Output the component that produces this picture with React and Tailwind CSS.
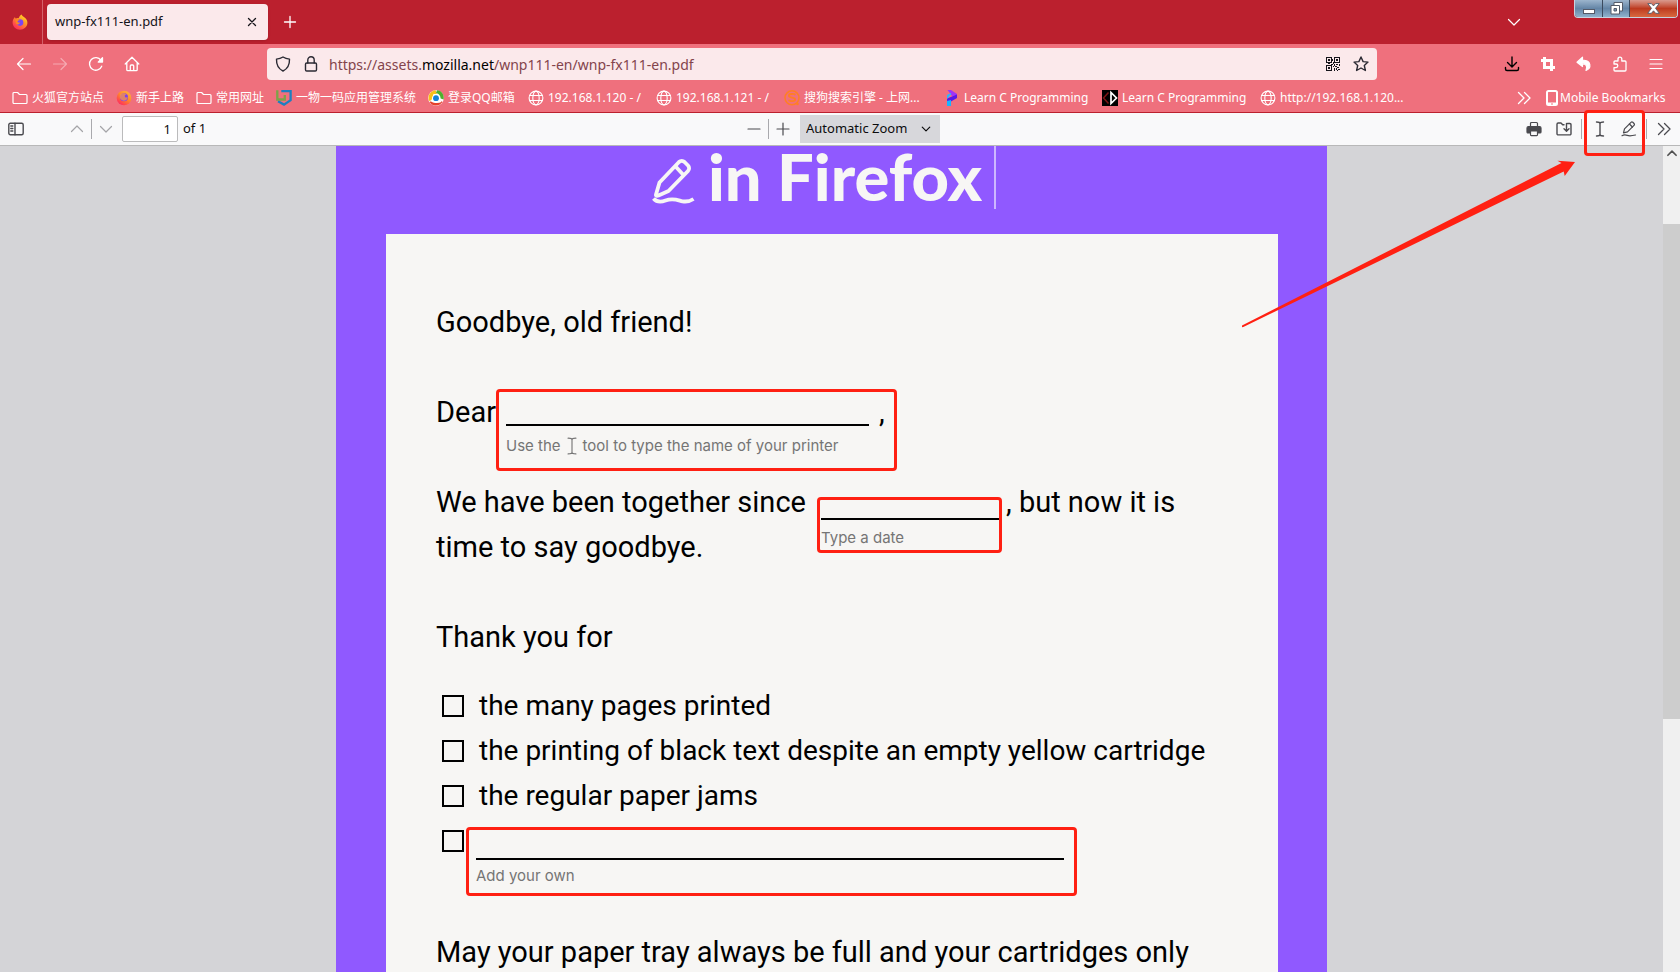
import React from "react";

const base = { fill: "none", stroke: "currentColor", strokeLinecap: "round", strokeLinejoin: "round" };

function Icon({ children, size = 16, sw = 1.2, className = "" }) {
  return (
    <svg viewBox="0 0 16 16" width={size} height={size} {...base} strokeWidth={sw} className={`shrink-0 ${className}`} aria-hidden="true">
      {children}
    </svg>
  );
}

function FirefoxLogo({ soft = false }) {
  return (
    <svg viewBox="0 0 16 16" width="16" height="16" className="shrink-0" aria-hidden="true">
      <defs>
        <linearGradient id={soft ? "fxs" : "fx"} x1="0.85" y1="0.05" x2="0.2" y2="0.95">
          <stop offset="0" stopColor={soft ? "#ffb13c" : "#ffe226"} />
          <stop offset="0.45" stopColor="#ff8a2a" />
          <stop offset="1" stopColor="#ff2a5f" />
        </linearGradient>
      </defs>
      {soft ? (
        <>
          <circle cx="8" cy="8" r="7.3" fill="url(#fxs)" />
          <circle cx="8" cy="7.2" r="4" fill="#7d3ff0" />
          <path d="M4 4.5c1.5-1.6 5.4-2 7 .6-1.5-.6-2.3 0-2.2 1.2.1 1.3 1.7 1.7 3 .8C11.5 10 9 11.3 6.8 10.6 4 9.7 3.2 7 4 4.5z" fill="#ff9a3d" opacity="0.75" />
        </>
      ) : (
        <>
          <path d="M.6 8.7C.5 6.4 1.5 4.3 3 2.9c0 .8.3 1.4.7 1.7.9-.5 2-.7 3-.4C7 2.7 8 1.4 9.6.4c.3 1.5 2 2.2 3.3 3.4 1.5 1.3 2.6 3 2.5 5.2-.2 3.9-3.4 6.7-7.4 6.7S.8 12.7.6 8.7z" fill="url(#fx)" />
          <circle cx="8" cy="8.6" r="3.3" fill="#7a45f5" />
          <path d="M3.6 5.5c1.5-.7 3.4-.4 4.4.7-1.6 0-2.5.7-2.4 1.5.3 1 1.3.9 2.3.9 0 1.4-1.7 2.2-3.3 1.6-.8-1.3-1.3-2.9-1-4.7z" fill="#ff8a1e" />
        </>
      )}
    </svg>
  );
}

const Folder = () => (
  <Icon><path d="M1 12.5v-9a1 1 0 0 1 1-1h3.6l1.9 2H14a1 1 0 0 1 1 1v7a1 1 0 0 1-1 1H2a1 1 0 0 1-1-1z" /></Icon>
);

const Globe = () => (
  <Icon sw={1.1}>
    <circle cx="8" cy="8" r="6.9" />
    <ellipse cx="8" cy="8" rx="3.2" ry="6.9" />
    <path d="M1.8 5.5h12.4M1.8 10.5h12.4" />
  </Icon>
);

const ShieldLogo = () => (
  <svg viewBox="0 0 16 16" width="16" height="16" className="shrink-0" aria-hidden="true">
    <path d="M5.3 1.2h9.3v9L8 14.6l-6-3.4" fill="none" stroke="#1d7fc0" strokeWidth="2.3" />
    <path d="M1.3.2v9.3h7.5V5" fill="none" stroke="#7ba348" strokeWidth="2.3" />
  </svg>
);

const QQMail = () => (
  <svg viewBox="0 0 16 16" width="16" height="16" className="shrink-0" aria-hidden="true">
    <circle cx="8" cy="8" r="7.8" fill="#fff" />
    <path d="M1 11C-.5 6 2 1 7.500.3L9 3.500C5.500 4 3.500 7 4 10z" fill="#f9c018" />
    <path d="M9 .3c5 .5 7.500 5 6.600 9.200l-3-1C12.600 5.500 11 4 8 3z" fill="#4faf2e" />
    <path d="M1.500 12c3 4.700 9.500 4.700 13 0l-2-1.500c-3 2-6 2-9 .5z" fill="#e5402b" />
    <path d="M3 11.500l2.500-7.500h4.500l3.500 8c-3 1.500-7 1.500-10.500-.5z" fill="#fff" />
    <circle cx="8" cy="8.2" r="2.9" fill="#1583d8" />
  </svg>
);

const Sogou = () => (
  <svg viewBox="0 0 16 16" width="16" height="16" className="shrink-0" aria-hidden="true">
    <circle cx="8" cy="7.8" r="7" fill="none" stroke="#ff7f24" strokeWidth="1.5" />
    <path d="M11.5 4.7c-2-1.2-6.6-1-6.6 1.1 0 2.4 6.3 1.2 6.3 3.7 0 2-4.5 2-6.7.7" fill="none" stroke="#ff7f24" strokeWidth="1.8" />
    <circle cx="13.5" cy="14" r="1.3" fill="#ff7f24" />
  </svg>
);

const Programiz = () => (
  <svg viewBox="0 0 16 16" width="16" height="16" className="shrink-0" aria-hidden="true">
    <path d="M3.5 0h3.5l6 4v1.5L8 6z" fill="#a033f7" />
    <path d="M13 4.5v3.5L7 11.5 3 12V8.5z" fill="#5a17ea" />
    <path d="M3 5l4-2v1.5L3 9z" fill="#28b8ff" />
    <path d="M3 11l4-1v6H3z" fill="#18b4ff" />
  </svg>
);

const LearnC = () => (
  <svg viewBox="0 0 16 16" width="16" height="16" className="shrink-0" aria-hidden="true">
    <rect width="16" height="16" fill="#000" />
    <path d="M6.5 2.5L1.5 8l5 5.5" fill="none" stroke="#7c1416" strokeWidth="1.5" />
    <path d="M9 2.5v11L14.5 8z" fill="none" stroke="#fff" strokeWidth="1.7" />
  </svg>
);

const Chevrons = () => <Icon sw={1.3}><path d="M2.5 2.5L8 8l-5.5 5.5M8.5 2.5L14 8l-5.5 5.5" /></Icon>;

const bookmarks = [
  { label: "火狐官方站点", icon: <Folder />, width: "w-[92px]" },
  { label: "新手上路", icon: <FirefoxLogo soft />, width: "w-[68px]" },
  { label: "常用网址", icon: <Folder />, width: "w-[68px]" },
  { label: "一物一码应用管理系统", icon: <ShieldLogo />, width: "w-[140px]" },
  { label: "登录QQ邮箱", icon: <QQMail />, width: "w-[88px]" },
  { label: "192.168.1.120 - /", icon: <Globe />, width: "w-[116px]" },
  { label: "192.168.1.121 - /", icon: <Globe />, width: "w-[116px]" },
  { label: "搜狗搜索引擎 - 上网...", icon: <Sogou />, width: "w-[148px]" },
  { label: "Learn C Programming", icon: <Programiz />, width: "w-[146px]" },
  { label: "Learn C Programming", icon: <LearnC />, width: "w-[146px]" },
  { label: "http://192.168.1.120...", icon: <Globe />, width: "w-[148px]" },
];

function IconButton({ label, children, className = "" }) {
  return (
    <button type="button" aria-label={label} className={`flex h-8 w-9 shrink-0 items-center justify-center ${className}`}>
      {children}
    </button>
  );
}

function TabBar() {
  return (
    <header className="flex h-11 shrink-0 bg-[#bb202e] text-white">
      <div className="flex w-[43px] shrink-0 items-center justify-center border-r border-[#d4616b] pr-0.5">
        <FirefoxLogo />
      </div>
      <div className="my-1 ml-1 flex w-[221px] items-center justify-between rounded bg-[#fbe9eb] pr-2 pl-2 text-[13px] text-[#15141a] shadow">
        <span>wnp-fx111-en.pdf</span>
        <button type="button" aria-label="Close tab" className="flex size-4 items-center justify-center">
          <Icon sw={1.3}><path d="M4.5 4.5l7 7M11.5 4.5l-7 7" /></Icon>
        </button>
      </div>
      <button type="button" aria-label="New tab" className="flex w-11 items-center justify-center">
        <Icon sw={1.3}><path d="M8 2.5v11M2.5 8h11" /></Icon>
      </button>
      <div className="flex-1" />
      <button type="button" aria-label="List all tabs" className="mr-[52px] flex w-4 items-center justify-center">
        <Icon><path d="M2.5 5.5L8 11l5.5-5.5" /></Icon>
      </button>
      <div className="mr-0.5 flex h-[18px] overflow-hidden rounded-b-sm border border-t-0 border-[#c9d3e0]">
        <button type="button" aria-label="Minimize" className="flex w-7 items-center justify-center border-r border-[#3b4a5e] bg-gradient-to-b from-[#9cb5cd] via-[#6485a6] to-[#8fb2cd]">
          <svg width="12" height="12" viewBox="0 0 12 12" aria-hidden="true"><rect x=".5" y="6.5" width="11" height="4" fill="#fff" stroke="#545a68" /></svg>
        </button>
        <button type="button" aria-label="Restore" className="flex w-[27px] items-center justify-center border-r border-[#3b4a5e] bg-gradient-to-b from-[#9cb5cd] via-[#6485a6] to-[#8fb2cd]">
          <svg width="13" height="13" viewBox="0 0 13 13" aria-hidden="true">
            <path d="M4 .5h8.5V9H4z" fill="#fff" stroke="#545a68" />
            <path d="M1 3.5h8.5V12H1z" fill="#fff" stroke="#545a68" />
            <path d="M4 6.5h2.5V9H4z" fill="#7895b3" stroke="#545a68" />
          </svg>
        </button>
        <button type="button" aria-label="Close" className="flex w-[47px] items-center justify-center bg-gradient-to-b from-[#d99a8e] via-[#bd3a1f] to-[#d8693f]">
          <svg width="13" height="11" viewBox="0 0 13 11" aria-hidden="true">
            <path d="M.8.6h3.6l2.1 2.3L8.6.6h3.6L8.5 5.3l3.8 5H8.6L6.5 7.8l-2.1 2.5H.7l3.8-5z" fill="#fff" stroke="#545a68" strokeWidth=".9" />
          </svg>
        </button>
      </div>
    </header>
  );
}

function NavBar() {
  return (
    <nav aria-label="Navigation" className="flex h-10 shrink-0 items-center bg-[#ef707d] pl-1.5 text-white">
      <IconButton label="Back"><Icon><path d="M14.5 8h-13M7 2.5L1.5 8 7 13.5" /></Icon></IconButton>
      <IconButton label="Forward" className="opacity-40"><Icon><path d="M1.5 8h13M9 2.5L14.5 8 9 13.5" /></Icon></IconButton>
      <IconButton label="Reload">
        <Icon sw={1.3}><path d="M13.7 10.2A6.3 6.3 0 1 1 13 4.3" /><path d="M14.5 1.8v4.3h-4.3z" fill="currentColor" /></Icon>
      </IconButton>
      <IconButton label="Home">
        <Icon sw={1.3}><path d="M1.2 8L8 1.2 14.8 8M2.8 6.5v7.2a1 1 0 0 0 1 1h8.4a1 1 0 0 0 1-1V6.5M6.3 14.5V10a1 1 0 0 1 1-1h1.4a1 1 0 0 1 1 1v4.5" /></Icon>
      </IconButton>
      <div className="ml-[117px] flex h-8 min-w-0 flex-1 items-center rounded bg-[#fbe9eb] pr-2 pl-2 text-[#2b2a33]">
        <Icon sw={1.4}><path d="M8 1c2 1.3 4 1.9 6.5 2.1C14.7 8.5 12.7 12.7 8 15 3.3 12.7 1.3 8.5 1.5 3.1 4 2.9 6 2.3 8 1z" /></Icon>
        <Icon sw={1.4} className="ml-3"><rect x="2.5" y="7" width="11" height="8" rx="1.2" /><path d="M4.8 7V4a3.2 3.2 0 0 1 6.4 0v3" /></Icon>
        <a href="https://assets.mozilla.net/wnp111-en/wnp-fx111-en.pdf" className="ml-2.5 flex-1 truncate text-[14px] text-[#83444b]">
          https://assets.<span className="text-black">mozilla.net</span>/wnp111-en/wnp-fx111-en.pdf
        </a>
        <button type="button" aria-label="QR code" className="mr-3">
          <svg width="16" height="16" viewBox="0 0 16 16" fill="#15141a" shapeRendering="crispEdges" aria-hidden="true">
            <path fillRule="evenodd" d="M1 1h6v6H1zM2 2v4h4V2zM3 3h2v2H3zM9 1h6v6H9zM10 2v4h4V2zM11 3h2v2h-2zM1 9h6v6H1zM2 10v4h4v-4zM3 11h2v2H3z" />
            <path d="M7 3h1v2H7zM8 6h1v2H8zM3 7h2v1H3zM6 8h2v1H6zM9 8h1v2H9zM11 8h2v1h-2zM14 8h1v2h-1zM8 10h1v1H8zM10 10h2v1h-2zM12 11h2v1h-2zM9 12h1v3H9zM11 12h1v2h-1zM13 13h2v1h-2zM12 14h1v1h-1z" />
          </svg>
        </button>
        <button type="button" aria-label="Bookmark this page">
          <Icon sw={1.4}><path d="M8 1l2.1 4.6 4.9.5-3.7 3.4 1.1 5L8 12l-4.4 2.5 1.1-5L1 6.1l4.9-.5z" /></Icon>
        </button>
      </div>
      <div className="ml-[117px] flex pr-1.5">
        <IconButton label="Downloads" className="text-black"><Icon sw={1.4}><path d="M8 1v9.5M3.5 6.5L8 11l4.5-4.5M1.5 11.5V13a1.5 1.5 0 0 0 1.5 1.5h10a1.5 1.5 0 0 0 1.5-1.5v-1.5" /></Icon></IconButton>
        <IconButton label="Screenshot"><Icon sw={3}><path strokeLinecap="butt" strokeLinejoin="miter" d="M4.5 1v10.5H15M1 4.5h10.5V15" /></Icon></IconButton>
        <IconButton label="Undo"><Icon><path fill="currentColor" d="M6.5 1.2L1 6.2l5.5 4.3V7.8c3.5 0 5.2 2.5 3.5 6.6 5.5-2.2 5.8-10-3.5-10.3z" /></Icon></IconButton>
        <IconButton label="Extensions"><Icon sw={1.3}><path d="M3 15h10a1 1 0 0 0 1-1V6a1 1 0 0 0-1-1H9.8V3a1.9 1.9 0 0 0-3.8 0v2H3a1 1 0 0 0-1 1v2h2a1.8 1.8 0 0 1 0 3.6H2V14a1 1 0 0 0 1 1z" /></Icon></IconButton>
        <IconButton label="Menu"><Icon><path d="M2 3.5h12M2 8h12M2 12.5h12" /></Icon></IconButton>
      </div>
    </nav>
  );
}

function BookmarksBar() {
  return (
    <nav aria-label="Bookmarks" className="flex h-7 shrink-0 items-center bg-[#ef707d] pr-3 pl-3 text-[12px] whitespace-nowrap text-white">
      <ul className="flex flex-1 gap-3">
        {bookmarks.map((b, i) => (
          <li key={i} className={`shrink-0 ${b.width}`}>
            <a href="#bookmark" className="flex items-center gap-1">
              {b.icon}
              {b.label}
            </a>
          </li>
        ))}
      </ul>
      <button type="button" aria-label="More bookmarks" className="mr-3.5"><Chevrons /></button>
      <a href="#mobile" className="flex w-[122px] items-center gap-0.5">
        <svg width="12" height="16" viewBox="0 0 12 16" aria-hidden="true">
          <rect x="1" y="1" width="10" height="14" rx="1.5" fill="none" stroke="#fff" strokeWidth="2" />
          <path d="M1 12.5h10v2.5H1z" fill="#fff" />
          <path d="M5 13.5h2v1H5z" fill="#ef707d" />
        </svg>
        Mobile Bookmarks
      </a>
    </nav>
  );
}

function Sep() {
  return <span className="h-5 w-px shrink-0 bg-[#a9a9ad]" />;
}

function ToolButton({ label, children, className = "" }) {
  return (
    <button type="button" aria-label={label} className={`flex h-7 w-7 shrink-0 items-center justify-center ${className}`}>
      {children}
    </button>
  );
}

function PdfToolbar() {
  return (
    <div role="toolbar" aria-label="PDF tools" className="grid h-[34px] shrink-0 grid-cols-[1fr_auto_1fr] items-center border-t border-b border-t-[#bb202e] border-b-[#b8b8b8] bg-[#f9f9fa] text-[13px] text-[#0c0c0d]">
      <div className="flex items-center pl-0.5">
        <ToolButton label="Toggle sidebar" className="mr-[33px] text-[#4a4a4f]">
          <Icon sw={1.4}><rect x=".8" y="2.3" width="14.4" height="11.4" rx="1.5" /><path d="M7 2.3v11.4M2.8 5h2M2.8 7.5h2M2.8 10h2" /></Icon>
        </ToolButton>
        <ToolButton label="Previous page" className="text-[#a5a5a8]"><Icon><path d="M2.5 10.5L8 5l5.5 5.5" /></Icon></ToolButton>
        <Sep />
        <ToolButton label="Next page" className="text-[#a5a5a8]"><Icon><path d="M2.5 5.5L8 11l5.5-5.5" /></Icon></ToolButton>
        <input aria-label="Page" defaultValue="1" className="ml-0.5 h-[26px] w-14 rounded-xs border border-[#bbbbbc] bg-white pr-1.5 text-right" />
        <span className="ml-[5px]">of 1</span>
      </div>
      <div className="flex items-center">
        <ToolButton label="Zoom out" className="text-[#4a4a4f]"><Icon><path d="M2 8h12" /></Icon></ToolButton>
        <Sep />
        <ToolButton label="Zoom in" className="text-[#4a4a4f]"><Icon><path d="M8 2v12M2 8h12" /></Icon></ToolButton>
        <div className="relative ml-[3px] flex items-center">
          <select aria-label="Zoom" className="h-7 w-[140px] appearance-none bg-[#d7d7db] pl-1.5">
            <option>Automatic Zoom</option>
          </select>
          <Icon size={12} sw={1.6} className="pointer-events-none absolute right-2"><path d="M3 5.5L8 10.5l5-5" /></Icon>
        </div>
      </div>
      <div className="flex items-center justify-end pr-0.5 text-[#4a4a4f]">
        <ToolButton label="Print">
          <Icon>
            <path fill="currentColor" d="M2.5 5.5h11a1.5 1.5 0 0 1 1.5 1.5v4a1 1 0 0 1-1 1H2a1 1 0 0 1-1-1V7a1.5 1.5 0 0 1 1.5-1.5z" />
            <path fill="#f9f9fa" d="M4.5 5.5v-3a1 1 0 0 1 1-1h5a1 1 0 0 1 1 1v3zM4.5 10h7v3.8a.8.8 0 0 1-.8.8H5.3a.8.8 0 0 1-.8-.8z" />
          </Icon>
        </ToolButton>
        <ToolButton label="Save" className="ml-0.5">
          <Icon sw={1.4}><path d="M11.5 2.5H13.8a1.2 1.2 0 0 1 1.2 1.2v9a1.2 1.2 0 0 1-1.2 1.2H2.2A1.2 1.2 0 0 1 1 12.7V3.2A1.2 1.2 0 0 1 2.2 2H5l1.7 1.8H8M10.5 2.5V10M8 7.8l2.5 2.5L13 7.8" /></Icon>
        </ToolButton>
        <span className="ml-[3px] flex"><Sep /></span>
        <div className="relative ml-1 flex items-center gap-px">
          <ToolButton label="Text">
            <Icon sw={1.4}><path d="M4.5 1c2 0 3.5.4 3.5 1.5C8 1.4 9.5 1 11.5 1M4.5 15c2 0 3.5-.4 3.5-1.5 0 1.1 1.5 1.5 3.5 1.5M8 2.5v11" /></Icon>
          </ToolButton>
          <ToolButton label="Draw">
            <Icon>
              <path d="M2.5 11.8l1-4L10 1.3a1.3 1.3 0 0 1 1.8 0l1.2 1.2a1.3 1.3 0 0 1 0 1.8L6.5 10.8z" />
              <path d="M8.4 3l3 3" />
              <path d="M1 14.7c2-1.1 3.5-.9 5.3-.3 2 .7 4.5.5 8.2-.4" />
            </Icon>
          </ToolButton>
          <span className="pointer-events-none absolute -top-[5px] -left-0.5 h-[46px] w-[61px] rounded border-3 border-[#ff2012]" />
        </div>
        <span className="ml-[3px] flex"><Sep /></span>
        <ToolButton label="Tools" className="ml-[3px]"><Chevrons /></ToolButton>
      </div>
    </div>
  );
}

const mark = "pointer-events-none absolute rounded border-3 border-[#ff2012]";
const hint = "text-[15px] leading-5 font-['Inter',sans-serif] whitespace-nowrap text-[#757575]";
const line = "w-full border-b-2 border-black bg-transparent outline-none";

function Check({ label, checkLabel }) {
  return (
    <label className="flex h-[45px] items-center gap-[15px] whitespace-nowrap">
      <input type="checkbox" aria-label={checkLabel} className="size-[22px] shrink-0 appearance-none border-2 border-black" />
      {label && <span>{label}</span>}
    </label>
  );
}

function Letter() {
  return (
    <article className="flex w-[991px] flex-col bg-[#9059ff] pr-[49px] pl-[50px] font-['Roboto',sans-serif] text-black">
      <h1 className="flex h-[88px] shrink-0 items-start justify-center pr-4 font-['Lato',sans-serif] text-[65px] leading-[60px] font-black text-[#f7f6f5]">
        <svg viewBox="0 0 44 48" width="44" height="48" {...base} strokeWidth="3.8" className="mt-3 mr-3 shrink-0" aria-hidden="true">
          <path d="M4 36.5l3.5-12L27 4a4 4 0 0 1 5.5 0l3.5 3.5a4 4 0 0 1 0 5.5L16.5 33l-10 4.5c-1.5.5-2.8.3-2.5-1z" />
          <path d="M24.5 9.5l6.5 7" />
          <path strokeLinecap="butt" d="M1.5 40.5c3 3.5 7 4 12 2 8-3 13 0 17 .8 4.5.7 8-.3 11-2.3" />
        </svg>
        <span>in Firefox</span>
        <span className="ml-3 h-[63px] w-0.5 bg-[#cdb6ff]" />
      </h1>
      <section className="flex-1 bg-[#f7f6f4] pt-[66px] pl-[50px] text-[29px] leading-[45px]">
        <p>Goodbye, old friend!</p>
        <div className="mt-[45px] flex h-[90px] items-start">
          <label htmlFor="printer" className="w-[70px]">Dear</label>
          <div className="relative w-[363px]">
            <input id="printer" className={`${line} block h-9`} />
            <p className={`${hint} mt-2.5 flex items-center`}>
              Use the
              <Icon size={18} sw={1} className="mx-0.5"><path d="M4.5 1c2 0 3.5.4 3.5 1.5C8 1.4 9.5 1 11.5 1M4.5 15c2 0 3.5-.4 3.5-1.5 0 1.1 1.5 1.5 3.5 1.5M8 2.5v11" /></Icon>
              tool to type the name of your printer
            </p>
            <span className={`${mark} -top-px -left-[10px] h-[82px] w-[401px]`} />
          </div>
          <span className="ml-2.5">,</span>
        </div>
        <div className="flex h-[45px] items-start whitespace-nowrap">
          <label htmlFor="since" className="w-[385px]">We have been together since</label>
          <div className="relative w-[179px]">
            <input id="since" className={`${line} block h-10`} />
            <p className={`${hint} mt-2`}>Type a date</p>
            <span className={`${mark} top-[17px] -left-1 h-14 w-[185px]`} />
          </div>
          <span className="ml-1.5">, but now it is</span>
        </div>
        <p>time to say goodbye.</p>
        <p className="mt-[45px]">Thank you for</p>
        <div className="mt-[23px] ml-[6px] text-[28px]">
          <Check label="the many pages printed" />
          <Check label="the printing of black text despite an empty yellow cartridge" />
          <Check label="the regular paper jams" />
          <div className="flex h-[45px]">
            <Check checkLabel="Your own reason" />
            <div className="relative ml-3 w-[588px]">
              <input aria-label="Add your own" className={`${line} block h-[42px]`} />
              <p className={`${hint} mt-1.5`}>Add your own</p>
              <span className={`${mark} top-[9px] -left-[10px] h-[69px] w-[611px]`} />
            </div>
          </div>
        </div>
        <p className="mt-[67px] whitespace-nowrap">May your paper tray always be full and your cartridges only</p>
      </section>
    </article>
  );
}

export default function App() {
  return (
    <div className="relative flex h-screen flex-col overflow-hidden bg-[#d4d4d7] font-['Noto_Sans','Noto_Sans_CJK_SC',sans-serif]">
      <TabBar />
      <NavBar />
      <BookmarksBar />
      <PdfToolbar />
      <div className="flex min-h-0 flex-1">
        <main className="flex min-w-0 flex-1 justify-center overflow-hidden">
          <Letter />
        </main>
        <div className="flex w-[17px] shrink-0 flex-col bg-[#f0f0f0]">
          <div className="flex h-[14px] items-center justify-center text-[#505050]"><Icon size={12} sw={2.2}><path d="M2.5 11L8 5.5l5.5 5.5" /></Icon></div>
          <div className="mt-16 h-[495px] bg-[#cdcdcd]" />
        </div>
      </div>
      <svg viewBox="0 0 336 168" width="336" height="168" className="pointer-events-none absolute top-[160px] right-[104px]" aria-hidden="true">
        <path d="M335 2L317.5.7l4 2.2L2 165.5v1.5l.8.3L323.7 11.5l1 4.6z" fill="#ff2012" />
      </svg>
    </div>
  );
}
